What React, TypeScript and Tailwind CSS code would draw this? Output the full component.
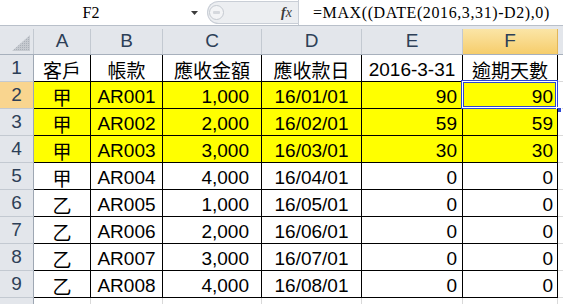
import React from "react";

type Row = {
  cust: string;
  id: string;
  amt: string;
  date: string;
  e: number;
  f: number;
  hl: boolean;
};

const rows: Row[] = [
  { cust: "甲", id: "AR001", amt: "1,000", date: "16/01/01", e: 90, f: 90, hl: true },
  { cust: "甲", id: "AR002", amt: "2,000", date: "16/02/01", e: 59, f: 59, hl: true },
  { cust: "甲", id: "AR003", amt: "3,000", date: "16/03/01", e: 30, f: 30, hl: true },
  { cust: "甲", id: "AR004", amt: "4,000", date: "16/04/01", e: 0, f: 0, hl: false },
  { cust: "乙", id: "AR005", amt: "1,000", date: "16/05/01", e: 0, f: 0, hl: false },
  { cust: "乙", id: "AR006", amt: "2,000", date: "16/06/01", e: 0, f: 0, hl: false },
  { cust: "乙", id: "AR007", amt: "3,000", date: "16/07/01", e: 0, f: 0, hl: false },
  { cust: "乙", id: "AR008", amt: "4,000", date: "16/08/01", e: 0, f: 0, hl: false },
];

const sans = { fontFamily: '"Liberation Sans", Arial, "Noto Sans CJK TC", sans-serif' };
const cjk = { fontFamily: '"Noto Sans CJK TC", "Liberation Sans", sans-serif' };
const serif = { fontFamily: '"Liberation Serif", "Times New Roman", serif' };

const cols = ["A", "B", "C", "D", "E", "F"];
const widths = ["w-[57px]", "w-[72px]", "w-[99px]", "w-[100px]", "w-[101px]", "w-[95px]"];

function RowHead({ n, active }: { n?: number; active?: boolean }) {
  return (
    <div
      className={`w-[34px] shrink-0 h-full flex items-center justify-center border-r border-b border-r-[#9ea7b3] border-b-[#c3c9d1] text-[19px] text-[#2d3f57] ${
        active ? "bg-[#f9d58f]" : "bg-[#e3e6eb]"
      }`}
      style={sans}
    >
      {n}
    </div>
  );
}

function Cell({
  w,
  align,
  bg,
  children,
  font,
  pad,
}: {
  w: string;
  align: "left" | "center" | "right";
  bg: string;
  children?: React.ReactNode;
  font: React.CSSProperties;
  pad?: string;
}) {
  const j = align === "center" ? "justify-center" : align === "right" ? "justify-end" : "justify-start";
  return (
    <div
      className={`${w} ${bg} ${j} ${pad ?? ""} shrink-0 h-full flex items-center pt-[2px] border-r border-b border-black text-[19px] text-black leading-none`}
      style={font}
    >
      {children}
    </div>
  );
}

export default function App() {
  return (
    <div className="w-[563px] h-[304px] overflow-hidden bg-white select-none" style={sans}>
      {/* formula bar */}
      <div className="h-[26px] flex items-stretch bg-white border-b border-[#b9c0ca]">
        <div className="w-[182px] flex items-center justify-center text-[16px] text-black" style={serif}>
          F2
        </div>
        <div className="w-[25px] flex items-center justify-center">
          <svg width="7" height="4" viewBox="0 0 7 4">
            <path d="M0 0h7L3.5 4z" fill="#3c3c3c" />
          </svg>
        </div>
        <div className="w-[91px] relative my-[1px] bg-[#eceef1] rounded-l-[12px] border border-r-0 border-[#c9ced6] flex items-center">
          <div className="ml-[1px] w-[15px] h-[15px] rounded-full border border-[#c4c9d0] bg-[#f3f4f6] flex items-center justify-center">
            <div className="w-[7px] h-[3px] rounded-[1px] bg-[#d5d8dd]" />
          </div>
          <span className="ml-auto mr-[6px] text-[14px] italic text-[#3b3b3b]" style={serif}>
            <span className="font-bold">f</span>x
          </span>
        </div>
        <div className="w-px bg-[#c9ced6]" />
        <div className="flex-1 flex items-center pl-[14px] text-[16px] tracking-[0.6px] text-black" style={serif}>
          =MAX((DATE(2016,3,31)-D2),0)
        </div>
      </div>
      <div className="h-[3px] bg-[#e4e7ec]" />

      {/* column headers */}
      <div className="h-[26px] flex bg-[#e3e6eb] border-b border-[#a7b0bc]">
        <div className="w-[34px] shrink-0 border-r border-[#c3c9d1] relative">
          <svg className="absolute right-[3px] bottom-[3px]" width="18" height="16" viewBox="0 0 18 16">
            <defs>
              <pattern id="dots" width="2" height="2" patternUnits="userSpaceOnUse">
                <rect width="2" height="2" fill="#c6cad0" />
                <rect width="1" height="1" fill="#aab0b8" />
              </pattern>
            </defs>
            <path d="M18 0V16H0z" fill="url(#dots)" />
          </svg>
        </div>
        {cols.map((c, i) => (
          <div
            key={c}
            className={`${widths[i]} shrink-0 flex items-center justify-center border-r text-[19px] text-[#2d3f57] ${
              c === "F"
                ? "bg-gradient-to-b from-[#fbe5a6] to-[#f6cd6a] border-[#e2b657]"
                : "border-[#c3c9d1]"
            }`}
          >
            {c}
          </div>
        ))}
        <div className="flex-1" />
      </div>

      {/* header row 1 */}
      <div className="h-[27px] flex">
        <RowHead n={1} />
        <Cell w={widths[0]} align="center" bg="bg-white" font={cjk}>客戶</Cell>
        <Cell w={widths[1]} align="center" bg="bg-white" font={cjk}>帳款</Cell>
        <Cell w={widths[2]} align="center" bg="bg-white" font={cjk}>應收金額</Cell>
        <Cell w={widths[3]} align="center" bg="bg-white" font={cjk}>應收款日</Cell>
        <Cell w={widths[4]} align="center" bg="bg-white" font={sans}>2016-3-31</Cell>
        <Cell w={widths[5]} align="center" bg="bg-white" font={cjk}>逾期天數</Cell>
        <div className="flex-1 border-b border-[#d9d9d9]" />
      </div>

      {rows.map((r, i) => {
        const bg = r.hl ? "bg-[#ffff00]" : "bg-white";
        const first = i === 0;
        return (
          <div key={r.id} className="h-[27px] flex">
            <RowHead n={i + 2} active={first} />
            <Cell w={widths[0]} align="center" bg={bg} font={cjk}>{r.cust}</Cell>
            <Cell w={widths[1]} align="center" bg={bg} font={sans}>{r.id}</Cell>
            <Cell w={widths[2]} align="right" bg={bg} font={sans} pad="pr-[12px]">{r.amt}</Cell>
            <Cell w={widths[3]} align="center" bg={bg} font={sans}>{r.date}</Cell>
            <Cell w={widths[4]} align="right" bg={bg} font={sans} pad="pr-[5px]">{r.e}</Cell>
            <div className="relative">
              <Cell w={widths[5]} align="right" bg={bg} font={sans} pad="pr-[4px]">{r.f}</Cell>
              {first && (
                <>
                  <div className="absolute left-[-2px] top-[-2px] w-[97px] h-[29px] border border-[#2b46d6] shadow-[inset_0_0_0_1px_#ffffff,inset_0_0_0_2px_#2b46d6] pointer-events-none" />
                  <div className="absolute right-[-4px] bottom-[-4px] w-[6px] h-[6px] bg-[#2b46d6] border border-white" />
                </>
              )}
            </div>
            <div className="flex-1 border-b border-[#d9d9d9]" />
          </div>
        );
      })}

      {/* next row, only its top edge is in view */}
      <div className="h-[27px] flex">
        <RowHead />
        {widths.map((w, i) => (
          <div key={i} className={`${w} shrink-0 h-full border-r border-[#d9d9d9]`} />
        ))}
      </div>
    </div>
  );
}
